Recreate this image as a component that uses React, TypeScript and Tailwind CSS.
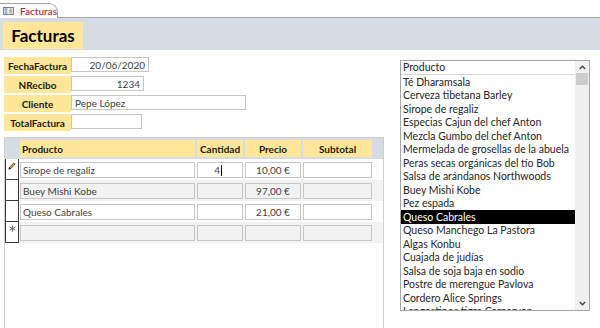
const products = [
  'Té Dharamsala',
  'Cerveza tibetana Barley',
  'Sirope de regaliz',
  'Especias Cajun del chef Anton',
  'Mezcla Gumbo del chef Anton',
  'Mermelada de grosellas de la abuela',
  'Peras secas orgánicas del tío Bob',
  'Salsa de arándanos Northwoods',
  'Buey Mishi Kobe',
  'Pez espada',
  'Queso Cabrales',
  'Queso Manchego La Pastora',
  'Algas Konbu',
  'Cuajada de judías',
  'Salsa de soja baja en sodio',
  'Postre de merengue Pavlova',
  'Cordero Alice Springs',
  'Langostinos tigre Carnarvon',
]

const lines = [
  { producto: 'Sirope de regaliz', cantidad: '4', precio: '10,00 €', marker: 'edit' },
  { producto: 'Buey Mishi Kobe', cantidad: '', precio: '97,00 €', marker: '' },
  { producto: 'Queso Cabrales', cantidad: '', precio: '21,00 €', marker: '' },
  { producto: '', cantidad: '', precio: '', marker: 'new' },
]

const Field = ({ label, value, width, align }: { label: string; value: string; width: string; align: 'left' | 'right' }) => (
  <div className="flex items-start h-[17px]">
    <div className="w-[67px] h-[17px] bg-[#ffe699] flex items-center justify-center font-bold text-[#1a1a1a]">
      {label}
    </div>
    <div
      className={`${width} h-[15px] border border-[#c6c6c6] bg-white flex items-center px-[3px] text-[#3f3f3f] ${align === 'right' ? 'justify-end' : 'justify-start'}`}
    >
      {value}
    </div>
  </div>
)

const Pencil = () => (
  <svg width="8" height="8" viewBox="0 0 8 8">
    <path d="M0.8 7.2 L1.6 5 L6 0.8 L7.2 2 L3 6.4 Z" fill="#e9a42a" stroke="#222" strokeWidth="0.7" />
    <path d="M0.8 7.2 L1.6 5 L3 6.4 Z" fill="#222" />
  </svg>
)

const Star = () => (
  <svg width="7" height="7" viewBox="0 0 8 8" stroke="#666" strokeWidth="1.1">
    <line x1="4" y1="0.5" x2="4" y2="7.5" />
    <line x1="0.8" y1="2.2" x2="7.2" y2="5.8" />
    <line x1="0.8" y1="5.8" x2="7.2" y2="2.2" />
  </svg>
)

export default function App() {
  return (
    <div className="w-[600px] h-[328px] overflow-hidden bg-white flex flex-col font-['Lato',sans-serif] text-[10px] leading-none">
      {/* Tab strip */}
      <div className="h-[18px] shrink-0 flex items-end border-b border-[#a6a6a6] bg-white">
        <div className="h-[15px] w-[58px] border-t border-r border-[#a6a6a6] rounded-tr-[9px] bg-white flex items-center gap-[6px] pl-[3px] -mb-px">
          <svg width="11" height="8" viewBox="0 0 11 8">
            <rect x="0.5" y="0.5" width="10" height="7" fill="#fff" stroke="#7f7f7f" />
            <rect x="1.5" y="1.5" width="3" height="1" fill="#3f6ea8" />
            <rect x="1.5" y="3.5" width="3" height="1" fill="#3f6ea8" />
            <rect x="1.5" y="5.5" width="3" height="1" fill="#3f6ea8" />
            <rect x="6" y="1.5" width="3.5" height="5" fill="#b8b8b8" />
          </svg>
          <span className="text-[#a4373a] text-[10px] font-semibold">Facturas</span>
        </div>
      </div>

      {/* Form header */}
      <div className="h-[32px] shrink-0 bg-[#d6dce4] pt-[4px] pl-[3px]">
        <div className="w-[80px] h-[27px] bg-[#ffe699] flex items-center justify-center text-[17px] font-bold text-black">
          Facturas
        </div>
      </div>

      {/* Detail */}
      <div className="flex-1 flex min-h-0">
        <div className="pl-[4px] pt-[7px] flex flex-col gap-[2px] w-[384px] shrink-0">
          <Field label="FechaFactura" value="20/06/2020" width="w-[78px]" align="right" />
          <Field label="NRecibo" value="1234" width="w-[73px]" align="right" />
          <Field label="Cliente" value="Pepe López" width="w-[175px]" align="left" />
          <Field label="TotalFactura" value="" width="w-[71px]" align="left" />

          {/* Subform */}
          <div className="mt-[4px] w-[380px] h-[230px] shrink-0 border border-[#cfcfcf] bg-white">
            <div className="h-[21px] bg-[#d6dce4] flex gap-[2px] pt-[2px] pl-[15px] font-bold text-[#1a1a1a]">
              <div className="w-[175px] h-[17px] bg-[#ffe699] flex items-center pl-[2px]">Producto</div>
              <div className="w-[46px] h-[17px] bg-[#ffe699] flex items-center justify-center">Cantidad</div>
              <div className="w-[56px] h-[17px] bg-[#ffe699] flex items-center justify-center">Precio</div>
              <div className="w-[69px] h-[17px] bg-[#ffe699] flex items-center justify-center">Subtotal</div>
            </div>
            {lines.map((l, i) => (
              <div key={i} className={`h-[21px] flex ${i % 2 === 1 ? 'bg-[#f2f2f2]' : 'bg-white'}`}>
                <div className="w-[14px] h-[21px] border-l border-r border-b border-[#3c3c3c] bg-white flex items-start justify-center pt-[3px]">
                  {l.marker === 'edit' && <Pencil />}
                  {l.marker === 'new' && <Star />}
                </div>
                <div className="flex gap-[2px] pt-[3px] pl-[1px] text-[#3f3f3f]">
                  <div className={`w-[175px] h-[16px] border border-[#c6c6c6] flex items-center px-[2px] ${i % 2 === 1 ? 'bg-[#f2f2f2]' : 'bg-white'}`}>
                    {l.producto}
                  </div>
                  <div className={`w-[46px] h-[16px] border border-[#c6c6c6] flex items-center justify-end px-[3px] ${i % 2 === 1 ? 'bg-[#f2f2f2]' : 'bg-white'}`}>
                    {l.cantidad}
                    {l.marker === 'edit' && <span className="w-px h-[11px] bg-black ml-[1px] mr-[17px]" />}
                  </div>
                  <div className={`w-[56px] h-[16px] border border-[#c6c6c6] flex items-center justify-center ${i % 2 === 1 ? 'bg-[#f2f2f2]' : 'bg-white'}`}>
                    {l.precio}
                  </div>
                  <div className={`w-[69px] h-[16px] border border-[#c6c6c6] ${i % 2 === 1 ? 'bg-[#f2f2f2]' : 'bg-white'}`} />
                </div>
              </div>
            ))}
          </div>
        </div>

        {/* Product list box */}
        <div className="ml-[16px] mt-[10px] w-[190px] h-[251px] border border-[#a6a6a6] flex bg-white">
          <div className="flex-1 overflow-hidden text-[#262626] text-[10.5px]">
            <div className="h-[14px] border-b border-[#dadada] flex items-center pl-[2px]">Producto</div>
            {products.map((p) => (
              <div
                key={p}
                className={`h-[13.5px] flex items-center pl-[2px] whitespace-nowrap ${p === 'Queso Cabrales' ? 'bg-black text-white' : ''}`}
              >
                {p}
              </div>
            ))}
          </div>
          <div className="w-[14px] bg-[#f0f0f0] flex flex-col items-stretch">
            <div className="h-[12px] flex items-center justify-center">
              <svg width="7" height="5" viewBox="0 0 7 5" fill="none" stroke="#404040" strokeWidth="1.3">
                <path d="M0.8 4 L3.5 1.2 L6.2 4" />
              </svg>
            </div>
            <div className="h-[12px] mx-[1px] bg-[#cdcdcd]" />
            <div className="flex-1" />
            <div className="h-[14px] flex items-center justify-center">
              <svg width="7" height="5" viewBox="0 0 7 5" fill="none" stroke="#404040" strokeWidth="1.3">
                <path d="M0.8 1 L3.5 3.8 L6.2 1" />
              </svg>
            </div>
          </div>
        </div>
      </div>
    </div>
  )
}
